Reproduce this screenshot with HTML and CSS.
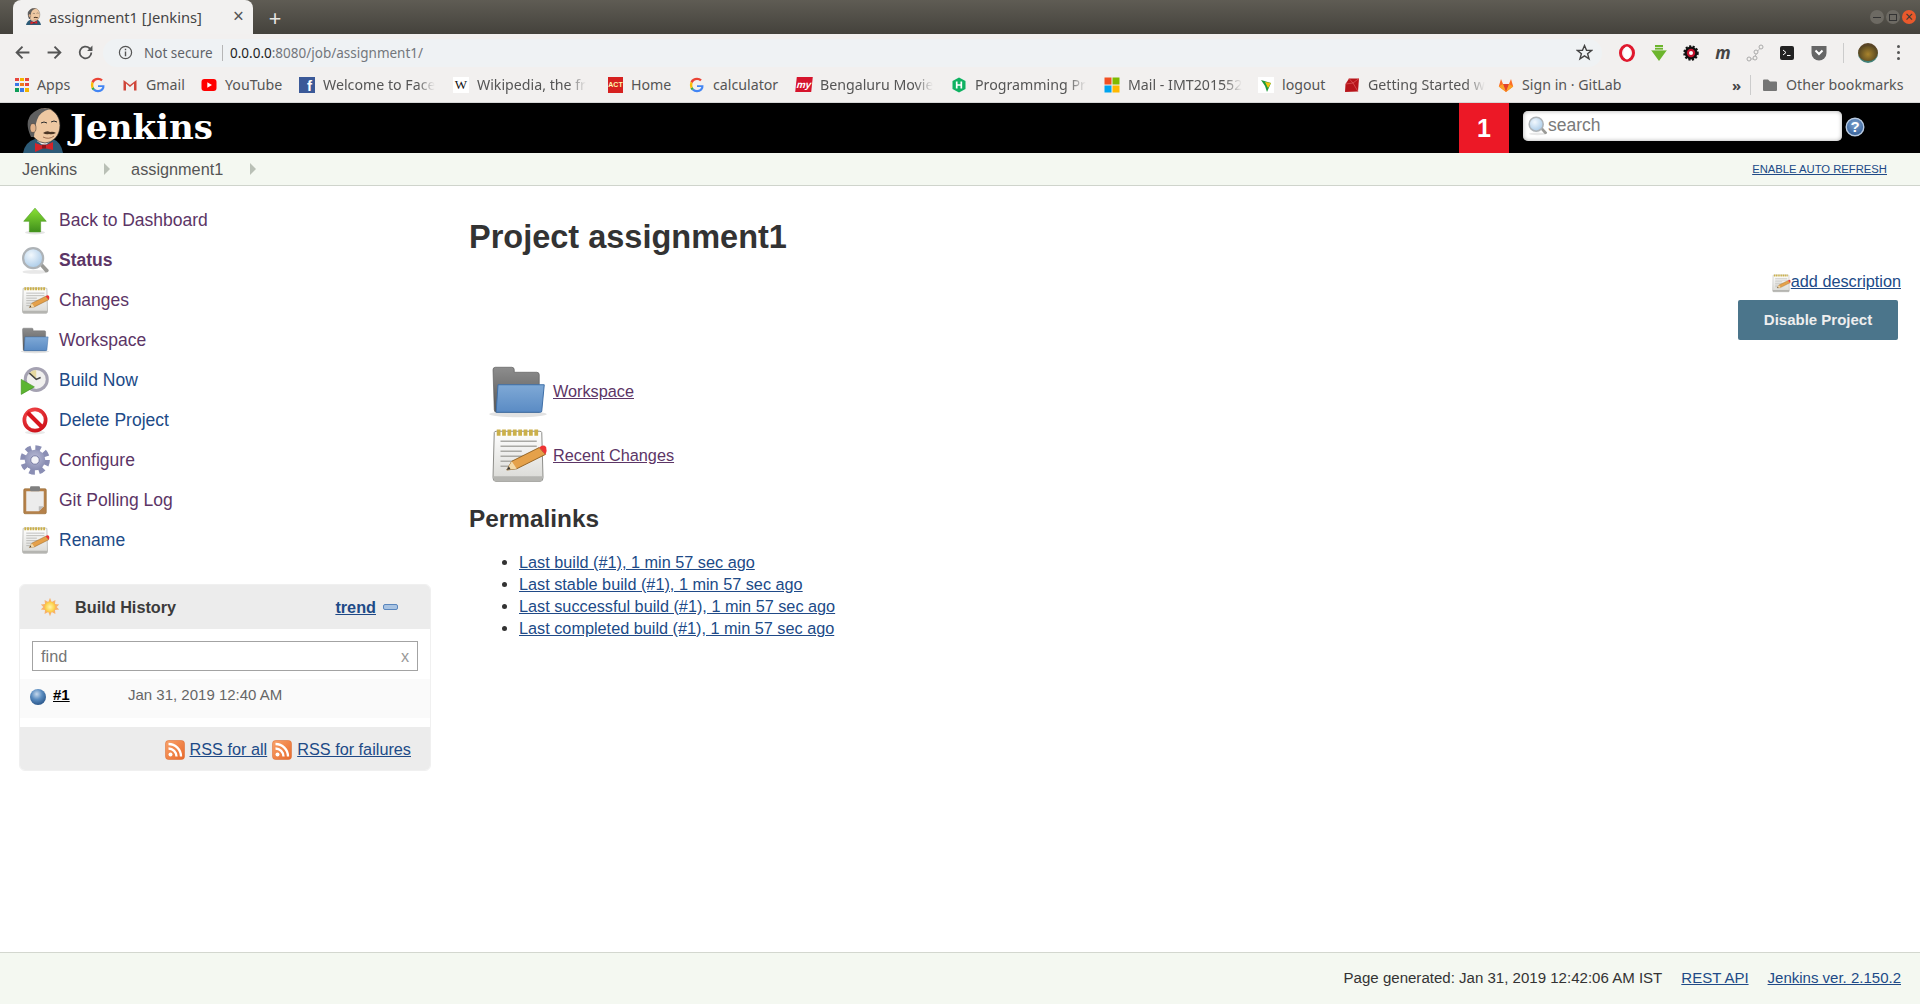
FILE: index.html
```html
<!DOCTYPE html>
<html lang="en">
<head>
<meta charset="utf-8">
<title>assignment1 [Jenkins]</title>
<link rel="stylesheet" href="styles.css">
</head>
<body>
<svg class="defs" aria-hidden="true">
  <defs>
    <linearGradient id="gArrow" x1="0" y1="0" x2="0" y2="1"><stop offset="0" stop-color="#8ae234"/><stop offset="1" stop-color="#3f8f1c"/></linearGradient>
    <linearGradient id="gFolder" x1="0" y1="0" x2="0" y2="1"><stop offset="0" stop-color="#7fa9d6"/><stop offset="1" stop-color="#5a8bc4"/></linearGradient>
    <linearGradient id="gFolderBack" x1="0" y1="0" x2="0" y2="1"><stop offset="0" stop-color="#8d8d8d"/><stop offset="1" stop-color="#555"/></linearGradient>
    <linearGradient id="gPage" x1="0" y1="0" x2="0" y2="1"><stop offset="0" stop-color="#fff"/><stop offset="1" stop-color="#d9d9d5"/></linearGradient>
    <linearGradient id="gRss" x1="0" y1="0" x2="1" y2="1"><stop offset="0" stop-color="#f9a26a"/><stop offset="1" stop-color="#e8692a"/></linearGradient>
    <radialGradient id="gBall" cx=".42" cy=".32" r=".75"><stop offset="0" stop-color="#c5d8ec"/><stop offset=".45" stop-color="#5a8cc0"/><stop offset="1" stop-color="#234e82"/></radialGradient>
    <radialGradient id="gLens" cx=".4" cy=".35" r=".8"><stop offset="0" stop-color="#f2f8fd"/><stop offset="1" stop-color="#9cc2e4"/></radialGradient>
    <radialGradient id="gSun" cx=".5" cy=".5" r=".5"><stop offset="0" stop-color="#fff6a8"/><stop offset="1" stop-color="#fcc93a"/></radialGradient>
    <radialGradient id="gHelp" cx=".5" cy=".35" r=".7"><stop offset="0" stop-color="#7fa3cf"/><stop offset="1" stop-color="#2e5a94"/></radialGradient>
    <radialGradient id="gRed" cx=".4" cy=".3" r=".8"><stop offset="0" stop-color="#ff5a5a"/><stop offset="1" stop-color="#cc0f18"/></radialGradient>
    <radialGradient id="gGear" cx=".5" cy=".4" r=".7"><stop offset="0" stop-color="#b9bbd6"/><stop offset="1" stop-color="#8085ac"/></radialGradient>

    <symbol id="i-jenkins" viewBox="0 0 40 45">
      <path d="M0 45Q2 34 12 31L30 31Q38 34 40 45Z" fill="#2c5a76"/>
      <path d="M14 33L21 38L28 33L27 30H15Z" fill="#f2f2f2"/>
      <ellipse cx="22" cy="17.500" rx="15" ry="17.500" fill="#eec8a2" stroke="#2b2b2b" stroke-width=".7"/>
      <path d="M8 29Q0 12 11 4Q18-1 27 1Q16 4 14 12Q12 18 11 29Z" fill="#5f5f5f"/>
      <ellipse cx="10" cy="20" rx="3" ry="4.500" fill="#e2b38c" stroke="#333" stroke-width=".5"/>
      <path d="M18 15Q21 13 24 15M28 14Q31 12 34 14" stroke="#2b2b2b" stroke-width="1" fill="none"/>
      <path d="M20 25Q24 22 27 24Q30 23 33 25Q29 27 26 26Q23 27 20 25Z" fill="#4a3525"/>
      <path d="M20 29Q26 32 31 28" stroke="#8a5a40" stroke-width=".8" fill="none"/>
      <path d="M12 35L21 38L30 34L30 42L21 40L12 44Z" fill="#d4242a"/>
      <rect x="19" y="36.500" width="4" height="4" fill="#8f1519"/>
    </symbol>

    <symbol id="i-arrow" viewBox="0 0 24 24">
      <ellipse cx="12" cy="22" rx="8" ry="1.500" fill="#e4e4e4"/>
      <path d="M12 2.500L21 13H16.500V21.500H7.500V13H3Z" fill="url(#gArrow)" stroke="#4b9a22" stroke-width=".5"/>
    </symbol>
    <symbol id="i-search" viewBox="0 0 24 24">
      <ellipse cx="12" cy="21.500" rx="10" ry="1.500" fill="#e8e8e8"/>
      <path d="M14.500 15L17 13.500L23 20Q23 22 20.500 22Z" fill="#9a9a96"/>
      <circle cx="10.500" cy="10.500" r="8" fill="url(#gLens)" stroke="#aeb3b7" stroke-width="1.800"/>
    </symbol>
    <symbol id="i-notepad" viewBox="0 0 48 48">
      <path d="M5 6Q5 5 7 5H41Q43 5 43 6L44 42Q44 45 42 45H6Q4 45 4 42Z" fill="url(#gPage)" stroke="#8e8e8a" stroke-width=".8"/>
      <path d="M4.500 41H43.500V43Q43.500 45 42 45H6Q4.500 45 4.500 43Z" fill="#b5b5b1"/>
      <path d="M7 6H41" stroke="#cbb04a" stroke-width="5" stroke-dasharray="3 1.300"/>
      <path d="M10 13H39M10 17H39M10 21H27M10 25H34M10 29H24M10 33H20" stroke="#a9a9a5" stroke-width="1.100"/>
      <path d="M15 36L19 29L41 18L46 23.500L23 35Z" fill="#e5a14a" stroke="#8a5a1c" stroke-width=".7"/>
      <path d="M15 36L19 29L23 35Z" fill="#f3d9a8"/>
      <path d="M15 36L16.700 33L18 35.300Z" fill="#333"/>
      <path d="M41 18Q44 15 46.500 17.500Q47.500 20.500 46 23.500Z" fill="#e33"/>
    </symbol>
    <symbol id="i-folder" viewBox="0 0 48 48">
      <ellipse cx="24" cy="42.500" rx="23" ry="2.500" fill="#e2e2e2"/>
      <path d="M4 7Q4 5 6 5H19Q21 5 21 7V9H39Q41 9 41 11V41H7Q5 41 5 39Z" fill="url(#gFolderBack)" stroke="#555" stroke-width=".5"/>
      <path d="M8 19H45L43 40Q43 41 42 41H6.500Z" fill="url(#gFolder)" stroke="#3e6fa8" stroke-width=".8"/>
    </symbol>
    <symbol id="i-clock" viewBox="0 0 24 24">
      <circle cx="13" cy="11.500" r="10" fill="#a5a2b2"/>
      <circle cx="13" cy="11.500" r="7.600" fill="#f1f0ee"/>
      <path d="M13 11.500V4A7.600 7.600 0 0 0 7.500 6.500Z" fill="#e6d9a0"/>
      <path d="M7.500 6.500L13 11.500L16.500 10" stroke="#444" stroke-width="1.100" fill="none"/>
      <path d="M1 11.500V23.500L11.500 17.500Z" fill="#5cb531" stroke="#3f8f1c" stroke-width=".5"/>
    </symbol>
    <symbol id="i-delete" viewBox="0 0 24 24">
      <ellipse cx="12" cy="22" rx="8" ry="1.500" fill="#e8e8e8"/>
      <circle cx="12" cy="12" r="8.500" fill="#fff" stroke="url(#gRed)" stroke-width="3"/>
      <path d="M6 6L18 18" stroke="#d8161e" stroke-width="3.200"/>
    </symbol>
    <symbol id="i-gear" viewBox="0 0 24 24">
      <circle cx="12" cy="12" r="9.400" fill="none" stroke="#8a8eb4" stroke-width="5" stroke-dasharray="4.200 3.180"/>
      <circle cx="12" cy="12" r="8.200" fill="url(#gGear)"/>
      <circle cx="12" cy="12" r="3.400" fill="#f4f4f8" stroke="#7a7ea6" stroke-width=".8"/>
    </symbol>
    <symbol id="i-clip" viewBox="0 0 24 24">
      <rect x="3" y="3" width="18" height="20" rx="1" fill="#b5814a" stroke="#94672f" stroke-width=".5"/>
      <path d="M5 5H19V17L15 21H5Z" fill="#ececec"/>
      <path d="M19 17L15 21V17Z" fill="#bbb"/>
      <rect x="8" y="1" width="8" height="4" rx="1" fill="#808080"/>
    </symbol>
    <symbol id="i-sun" viewBox="0 0 24 24">
      <path d="M12 1L14 6L18.500 3.500L18 8.500L23 9L20 12L23 15L18 15.500L18.500 20.500L14 18L12 23L10 18L5.500 20.500L6 15.500L1 15L4 12L1 9L6 8.500L5.500 3.500L10 6Z" fill="#f7b26a"/>
      <circle cx="12" cy="12" r="6.500" fill="url(#gSun)"/>
    </symbol>
    <symbol id="i-rss" viewBox="0 0 20 20">
      <rect x=".5" y=".5" width="19" height="19" rx="3" fill="url(#gRss)" stroke="#d9662a" stroke-width=".5"/>
      <circle cx="5.500" cy="14.500" r="2" fill="#fff"/>
      <path d="M3.500 8.500A8 8 0 0 1 11.500 16.500M3.500 4A12.500 12.500 0 0 1 16 16.500" stroke="#fff" stroke-width="2.300" fill="none"/>
    </symbol>
    <symbol id="i-g" viewBox="0 0 16 16">
      <path d="M14.500 8.200H8V10H12.400A4.600 4.600 0 0 1 8 13Q6 13 4.700 11.700L3 13.300Q5 15.300 8 15.300Q11 15.300 13 13.300Q14.800 11.300 14.500 8.200Z" fill="#4285f4"/>
      <path d="M3 13.300L4.700 11.700Q4 11 3.600 10L1.500 11.600Q2 12.600 3 13.300Z" fill="#34a853"/>
      <path d="M3.600 10Q3 8 3.600 6L1.500 4.400Q.100 8 1.500 11.600Z" fill="#fbbc05"/>
      <path d="M1.500 4.400L3.600 6Q5 3 8 3Q10 3 11.200 4.200L12.800 2.500Q11 .700 8 .700Q3.500 .700 1.500 4.400Z" fill="#ea4335"/>
    </symbol>
  </defs>
</svg>

<header class="chrome">
  <div class="tabstrip">
    <div class="tab">
      <svg class="tab-fav"><use href="#i-jenkins"/></svg>
      <span class="tab-title">assignment1 [Jenkins]</span>
      <span class="tab-close">×</span>
    </div>
    <span class="tab-new">+</span>
    <div class="winbtns">
      <span class="winbtn"><span class="winbtn-min"></span></span>
      <span class="winbtn"><span class="winbtn-max"></span></span>
      <span class="winbtn winbtn-close">×</span>
    </div>
  </div>

  <div class="toolbar">
    <svg class="navicon" viewBox="0 0 16 16"><path d="M14.500 8H2.500M8 2.500L2.500 8L8 13.500" fill="none" stroke="#555" stroke-width="1.800"/></svg>
    <svg class="navicon" viewBox="0 0 16 16"><path d="M1.500 8H13.500M8 2.500L13.500 8L8 13.500" fill="none" stroke="#555" stroke-width="1.800"/></svg>
    <svg class="navicon" viewBox="0 0 16 16"><path d="M13.500 8A5.500 5.500 0 1 1 11.800 4L13.500 5.500" fill="none" stroke="#555" stroke-width="1.700"/><path d="M14.500 1.500V6.500H9.500Z" fill="#555"/></svg>
    <div class="omnibox">
      <svg class="omni-info" viewBox="0 0 16 16"><circle cx="8" cy="8" r="6.500" fill="none" stroke="#555" stroke-width="1.300"/><path d="M8 7V12M8 4V5.600" stroke="#555" stroke-width="1.500"/></svg>
      <span class="omni-secure">Not secure</span>
      <span class="omni-sep"></span>
      <span class="omni-url"><span class="omni-host">0.0.0.0</span>:8080/job/assignment1/</span>
      <svg class="omni-star" viewBox="0 0 16 16"><path d="M8 1.500L9.900 6H14.800L10.900 9.100L12.300 14L8 11.200L3.700 14L5.100 9.100L1.200 6H6.100Z" fill="none" stroke="#444" stroke-width="1.300"/></svg>
    </div>
    <div class="extensions">
      <svg class="ext" viewBox="0 0 18 18"><ellipse cx="9" cy="9" rx="6.500" ry="7.500" fill="none" stroke="#e0182d" stroke-width="3"/><ellipse cx="9" cy="9" rx="3.500" ry="6.500" fill="#fff"/></svg>
      <svg class="ext" viewBox="0 0 18 18"><path d="M5 1H13V6H17L9 17L1 6H5Z" fill="#6cb52d"/><path d="M1 6H17M3 3.500H15" stroke="#f2f0ee" stroke-width=".8"/></svg>
      <svg class="ext" viewBox="0 0 18 18"><circle cx="9" cy="9" r="6.500" fill="#111" stroke="#111" stroke-width="2.500" stroke-dasharray="2 1.500"/><circle cx="9" cy="9" r="4.200" fill="#c4112d"/><circle cx="9" cy="9" r="2" fill="#fff"/></svg>
      <span class="ext ext-m">m</span>
      <svg class="ext" viewBox="0 0 18 18"><path d="M3 15H8L11 8L15 3" fill="none" stroke="#bbb" stroke-width="1"/><circle cx="3" cy="15" r="2" fill="#f2f0ee" stroke="#aaa"/><circle cx="9" cy="14" r="2" fill="#f2f0ee" stroke="#aaa"/><circle cx="10" cy="8" r="2" fill="#f2f0ee" stroke="#aaa"/><circle cx="15" cy="3" r="2" fill="#f2f0ee" stroke="#aaa"/></svg>
      <svg class="ext" viewBox="0 0 18 18"><rect x="2" y="2" width="14" height="14" rx="2" fill="#222"/><path d="M5 6L8 8.500L5 11M9 11.500H12.500" fill="none" stroke="#fff" stroke-width="1"/></svg>
      <svg class="ext" viewBox="0 0 18 18"><path d="M1.500 2H16.500V9A7.500 7.500 0 0 1 1.500 9Z" fill="#666"/><path d="M5.500 6.500L9 10L12.500 6.500" fill="none" stroke="#fff" stroke-width="2"/></svg>
      <span class="ext-sep"></span>
      <span class="avatar"></span>
      <span class="kebab"><i></i><i></i><i></i></span>
    </div>
  </div>

  <nav class="bookmarks">
    <a class="bm"><span class="bm-apps"><i class="a1"></i><i class="a2"></i><i class="a3"></i><i class="a4"></i><i class="a5"></i><i class="a6"></i><i class="a7"></i><i class="a8"></i><i class="a9"></i></span><span class="bm-label">Apps</span></a>
    <a class="bm"><svg class="bm-ico"><use href="#i-g"/></svg></a>
    <a class="bm"><svg class="bm-ico" viewBox="0 0 16 16"><path d="M1.500 13.500V3L8 8L14.500 3V13.500H12V6.500L8 10L4 6.500V13.500Z" fill="#d0463a"/></svg><span class="bm-label">Gmail</span></a>
    <a class="bm"><svg class="bm-ico" viewBox="0 0 16 16"><rect x=".5" y="2" width="15" height="12" rx="3" fill="#f00"/><path d="M6.300 5.300L11 8L6.300 10.700Z" fill="#fff"/></svg><span class="bm-label">YouTube</span></a>
    <a class="bm"><span class="bm-fb">f</span><span class="bm-label bm-fade">Welcome to Face</span></a>
    <a class="bm"><span class="bm-wiki">W</span><span class="bm-label bm-fade">Wikipedia, the fr</span></a>
    <a class="bm"><span class="bm-act">ACT</span><span class="bm-label">Home</span></a>
    <a class="bm"><svg class="bm-ico"><use href="#i-g"/></svg><span class="bm-label">calculator</span></a>
    <a class="bm"><span class="bm-my">my</span><span class="bm-label bm-fade">Bengaluru Movie</span></a>
    <a class="bm"><svg class="bm-ico" viewBox="0 0 16 16"><path d="M8 .500L14.500 4V12L8 15.500L1.500 12V4Z" fill="#0fb262"/><path d="M5.700 4.500V11.500M10.300 4.500V11.500M5.700 8H10.300" stroke="#fff" stroke-width="1.700"/></svg><span class="bm-label bm-fade">Programming Pr</span></a>
    <a class="bm"><svg class="bm-ico" viewBox="0 0 16 16"><rect x=".5" y=".5" width="7" height="7" fill="#f25022"/><rect x="8.500" y=".5" width="7" height="7" fill="#7fba00"/><rect x=".5" y="8.500" width="7" height="7" fill="#00a4ef"/><rect x="8.500" y="8.500" width="7" height="7" fill="#ffb900"/></svg><span class="bm-label bm-fade">Mail - IMT201552</span></a>
    <a class="bm"><svg class="bm-ico" viewBox="0 0 16 16"><rect width="16" height="16" fill="#fff"/><path d="M3 3L13 6L9 15L7 9Z" fill="#1f9a3a"/><path d="M7 5L13 6L10 11Z" fill="#f2c40f"/></svg><span class="bm-label">logout</span></a>
    <a class="bm"><svg class="bm-ico" viewBox="0 0 16 16"><path d="M5 1.500H15L14 14.500L1 15L1.500 7Z" fill="#b7141a"/><path d="M5 1.500L9 6L14 14.500M9 6L1.500 7M9 6L15 1.500" stroke="#e86a6a" stroke-width=".6" fill="none"/></svg><span class="bm-label bm-fade">Getting Started w</span></a>
    <a class="bm"><svg class="bm-ico" viewBox="0 0 16 16"><path d="M8 15L.8 9.500L3 2L5 7H11L13 2L15.200 9.500Z" fill="#fc6d26"/><path d="M8 15L5 7H11Z" fill="#e24329"/><path d="M.8 9.500L5 7L8 15ZM15.200 9.500L11 7L8 15Z" fill="#fca326"/></svg><span class="bm-label">Sign in · GitLab</span></a>
    <span class="bm-more">»</span>
    <span class="bm-sep"></span>
    <a class="bm bm-other"><svg class="bm-ico" viewBox="0 0 16 16"><path d="M1 3.500Q1 2.500 2 2.500H6L8 4.500H14Q15 4.500 15 5.500V13Q15 14 14 14H2Q1 14 1 13Z" fill="#757575"/></svg><span class="bm-label">Other bookmarks</span></a>
  </nav>
</header>

<div class="page-head">
  <a class="logo"><svg class="logo-head"><use href="#i-jenkins"/></svg><span class="logo-text">Jenkins</span></a>
  <div class="head-right">
    <span class="badge">1</span>
    <div class="searchbox">
      <svg class="search-ico"><use href="#i-search"/></svg>
      <span class="search-ph">search</span>
    </div>
    <svg class="help" viewBox="0 0 20 20"><circle cx="10" cy="10" r="8.800" fill="url(#gHelp)" stroke="#b9cbe2" stroke-width="1.400"/><text class="help-q" x="10" y="15" text-anchor="middle">?</text></svg>
  </div>
</div>

<div class="crumbs">
  <a class="crumb">Jenkins</a><span class="crumb-arrow"></span>
  <a class="crumb">assignment1</a><span class="crumb-arrow"></span>
  <a class="refresh" href="#">ENABLE AUTO REFRESH</a>
</div>

<main class="layout">
  <aside class="side">
    <ul class="tasks">
      <li class="task"><svg class="task-ico"><use href="#i-arrow"/></svg><a class="visited">Back to Dashboard</a></li>
      <li class="task"><svg class="task-ico"><use href="#i-search"/></svg><a class="visited task-current">Status</a></li>
      <li class="task"><svg class="task-ico"><use href="#i-notepad"/></svg><a class="visited">Changes</a></li>
      <li class="task"><svg class="task-ico"><use href="#i-folder"/></svg><a class="visited">Workspace</a></li>
      <li class="task"><svg class="task-ico"><use href="#i-clock"/></svg><a class="link">Build Now</a></li>
      <li class="task"><svg class="task-ico"><use href="#i-delete"/></svg><a class="link">Delete Project</a></li>
      <li class="task"><svg class="task-ico"><use href="#i-gear"/></svg><a class="visited">Configure</a></li>
      <li class="task"><svg class="task-ico"><use href="#i-clip"/></svg><a class="visited">Git Polling Log</a></li>
      <li class="task"><svg class="task-ico"><use href="#i-notepad"/></svg><a class="link">Rename</a></li>
    </ul>

    <section class="history">
      <div class="history-head">
        <svg class="sun"><use href="#i-sun"/></svg>
        <span class="history-title">Build History</span>
        <a class="trend" href="#">trend</a>
        <span class="minus"></span>
      </div>
      <div class="history-body">
        <div class="find"><span class="find-ph">find</span><span class="find-x">x</span></div>
        <div class="build">
          <svg class="ball" viewBox="0 0 20 20"><circle cx="10" cy="10" r="8" fill="url(#gBall)"/></svg>
          <a class="build-no" href="#">#1</a>
          <span class="build-date">Jan 31, 2019 12:40 AM</span>
        </div>
      </div>
      <div class="history-foot">
        <svg class="rss"><use href="#i-rss"/></svg><a class="link-u" href="#">RSS for all</a>
        <svg class="rss"><use href="#i-rss"/></svg><a class="link-u" href="#">RSS for failures</a>
      </div>
    </section>
  </aside>

  <section class="content">
    <h1 class="title">Project assignment1</h1>
    <div class="desc-row"><svg class="desc-ico"><use href="#i-notepad"/></svg><a class="link-u" href="#">add description</a></div>
    <div class="btn-row"><button class="btn">Disable Project</button></div>
    <div class="proj-link"><svg class="proj-ico"><use href="#i-folder"/></svg><a class="visited-u" href="#">Workspace</a></div>
    <div class="proj-link"><svg class="proj-ico"><use href="#i-notepad"/></svg><a class="visited-u" href="#">Recent Changes</a></div>
    <h2 class="perma-title">Permalinks</h2>
    <ul class="permalinks">
      <li><a class="link-u" href="#">Last build (#1), 1 min 57 sec ago</a></li>
      <li><a class="link-u" href="#">Last stable build (#1), 1 min 57 sec ago</a></li>
      <li><a class="link-u" href="#">Last successful build (#1), 1 min 57 sec ago</a></li>
      <li><a class="link-u" href="#">Last completed build (#1), 1 min 57 sec ago</a></li>
    </ul>
  </section>
</main>

<footer class="foot">
  <span class="foot-gen">Page generated: Jan 31, 2019 12:42:06 AM IST</span>
  <a class="link-u" href="#">REST API</a>
  <a class="link-u" href="#">Jenkins ver. 2.150.2</a>
</footer>
</body>
</html>
```
FILE: styles.css
```css
* { box-sizing: border-box; }
html, body { margin: 0; height: 100%; }
body {
  width: 1920px;
  height: 1004px;
  overflow: hidden;
  display: flex;
  flex-direction: column;
  font-family: "Liberation Sans", Arial, sans-serif;
  font-size: 16.25px;
  color: #333;
  background: #fff;
}
.defs { position: absolute; width: 0; height: 0; }
ul { margin: 0; padding: 0; list-style: none; }
a { cursor: pointer; }

/* browser chrome */
.chrome { height: 103px; flex: none; font-family: "Noto Sans", sans-serif; font-size: 13.5px; color: #5a5a5a; }
.tabstrip {
  height: 34px;
  display: flex;
  align-items: flex-end;
  padding-left: 13px;
  background: linear-gradient(#5f5c54, #44423c);
}
.tab {
  width: 240px;
  height: 34px;
  display: flex;
  align-items: center;
  padding: 0 0 1px 13px;
  background: #f2f1f0;
  border-radius: 8px 8px 0 0;
  color: #444;
}
.tab-fav { width: 15px; height: 17px; flex: none; }
.tab-title { margin-left: 8px; width: 175px; white-space: nowrap; font-size: 14.7px; }
.tab-close { font-size: 19px; line-height: 1; margin-left: 9px; color: #555; }
.tab-new { width: 44px; height: 34px; line-height: 34px; text-align: center; color: #e8e6e2; font-size: 22px; }
.winbtns { margin-left: auto; height: 34px; display: flex; align-items: center; gap: 2px; padding-right: 4px; }
.winbtn { width: 14px; height: 14px; border-radius: 50%; background: #6d6a63; display: flex; align-items: center; justify-content: center; color: #3a3a36; }
.winbtn-min { width: 8px; height: 1px; background: #333; }
.winbtn-max { width: 8px; height: 7px; border: 1px solid #333; }
.winbtn-close { background: #e9592c; font-size: 14px; line-height: 14px; }

.toolbar { height: 35px; display: flex; align-items: center; padding: 2px 0 0 14px; background: #f2f0ef; }
.navicon { width: 17px; height: 17px; margin-right: 15px; flex: none; }
.navicon + .navicon + .navicon { margin-left: -1px; }
.omnibox {
  margin-left: -6px;
  width: 1499px;
  height: 28px;
  display: flex;
  align-items: center;
  padding-left: 15px;
  padding-right: 9px;
  border-radius: 14px;
  background: #eff2f4;
}
.omni-info { width: 15px; height: 15px; flex: none; }
.omni-secure { margin-left: 11px; width: 68px; white-space: nowrap; color: #5f6368; }
.omni-sep { width: 1px; height: 16px; background: #b6b6b6; margin: 0 7px 0 10px; }
.omni-url { color: #73777c; white-space: nowrap; font-size: 13.5px; }
.omni-host { color: #222; }
.omni-star { width: 17px; height: 17px; margin-left: auto; }
.extensions { display: flex; align-items: center; flex: none; margin-left: 16px; }
.ext { width: 18px; height: 18px; margin-right: 14px; flex: none; }
.ext-m { font: italic bold 17px/18px "Noto Sans", sans-serif; color: #444; text-align: center; }
.ext-sep { width: 1px; height: 20px; background: #ccc; margin: 0 14px 0 1px; }
.avatar { width: 20px; height: 20px; border-radius: 50%; background: radial-gradient(circle at 50% 55%, #a8832c, #5b4a22 70%); border-top: 3px solid #5a4526; border-bottom: 2px solid #3f7f78; }
.kebab { margin-left: 19px; width: 4px; display: flex; flex-direction: column; gap: 3px; }
.kebab i { width: 3px; height: 3px; border-radius: 50%; background: #555; }

.bookmarks {
  height: 34px;
  display: grid;
  grid-template-columns: 75px 32px 79px 98px 154px 155px 81px 107px 155px 153px 154px 86px 154px 234px 18px 12px 1fr;
  align-items: center;
  padding: 0 0 2px 15px;
  background: #f2f0ef;
  border-bottom: 1px solid #d6d6d6;
  font-size: 14.2px;
}
.bm { display: flex; align-items: center; min-width: 0; }
.bm-ico { width: 16px; height: 16px; flex: none; }
.bm-label { margin-left: 8px; white-space: nowrap; color: #555; }
.bm-fade { -webkit-mask-image: linear-gradient(90deg, #000 84%, transparent); mask-image: linear-gradient(90deg, #000 84%, transparent); }
.bm-apps { width: 14px; height: 14px; display: grid; grid-template: repeat(3, 1fr) / repeat(3, 1fr); gap: 1.500px; flex: none; }
.bm-apps i { display: block; }
.a1, .a2, .a3 { background: #e8453c; }
.a2 { background: #f4b400; }
.a4 { background: #3b78e7; }
.a5 { background: #ee7a1a; }
.a6 { background: #e8453c; }
.a7 { background: #0f9d58; }
.a8 { background: #3b78e7; }
.a9 { background: #f4b400; }
.bm-fb { width: 16px; height: 16px; background: #3b5998; color: #fff; font: bold 15px/18px "Liberation Sans", sans-serif; text-align: right; padding-right: 3px; flex: none; }
.bm-wiki { width: 16px; height: 16px; background: #fff; color: #111; font: 13px/16px "Liberation Serif", serif; text-align: center; flex: none; }
.bm-act { width: 15px; height: 16px; background: #d6201f; color: #fff8b0; font: bold 7px/16px "Liberation Sans", sans-serif; text-align: center; overflow: hidden; flex: none; }
.bm-my { width: 16px; height: 15px; background: #d6142c; color: #fff; font: italic bold 10px/15px "Liberation Sans", sans-serif; text-align: center; transform: skewX(-6deg); flex: none; }
.bm-more { color: #444; font-size: 15px; font-weight: 700; }
.bm-sep { width: 1px; height: 20px; background: #ccc; }
.bm-other .bm-label { margin-left: 8px; }

/* jenkins header */
.page-head {
  height: 50px;
  flex: none;
  display: flex;
  align-items: stretch;
  background: #000;
  padding-left: 23px;
}
.logo { display: flex; align-items: flex-end; }
.logo-head { width: 40px; height: 45px; flex: none; }
.logo-text {
  margin: -2px 0 0 7px;
  align-self: center;
  font: bold 34px/50px "DejaVu Serif", serif;
  color: #fff;
}
.head-right { margin-left: auto; display: flex; align-items: center; }
.badge {
  width: 50px;
  height: 50px;
  background: #ec1826;
  color: #fff;
  font-size: 25px;
  font-weight: 700;
  line-height: 50px;
  text-align: center;
}
.searchbox {
  margin: -4px 0 0 14px;
  width: 319px;
  height: 30px;
  display: flex;
  align-items: center;
  padding: 0 0 1px 4px;
  background: #fff;
  border-radius: 5px;
  box-shadow: inset 0 0 4px #aaa;
}
.search-ico { width: 21px; height: 21px; flex: none; }
.search-ph { margin-left: 0; font-size: 17.5px; color: #7a7a7a; }
.help { width: 20px; height: 20px; margin: -2px 55px 0 3px; }
.help-q { font: bold 15px "Liberation Sans", sans-serif; fill: #fff; }

.crumbs {
  height: 33px;
  flex: none;
  display: flex;
  align-items: center;
  padding-left: 22px;
  background: #f4f8f1;
  border-bottom: 1px solid #cfd4cc;
  color: #555;
}
.crumb { white-space: nowrap; }
.crumb-arrow { width: 0; height: 0; margin: 0 21px 0 27px; border: 6px solid transparent; border-left: 6px solid #b9c0b6; border-right: 0; }
.refresh { margin: 0 33px 0 auto; font-size: 11.25px; color: #204a87; }

/* layout */
.layout { flex: 1; display: flex; min-height: 0; }
.side { width: 469px; flex: none; padding: 14px 0 0 19px; }
.task { height: 40px; display: flex; align-items: center; font-size: 17.5px; }
.task-ico { width: 30px; height: 30px; flex: none; margin: 0 9px 0 1px; }
.visited { color: #5c3566; }
.link { color: #204a87; }
.task-current { font-weight: 700; }
.link-u { color: #204a87; text-decoration: underline; }
.visited-u { color: #5c3566; text-decoration: underline; }

.history {
  width: 412px;
  height: 187px;
  margin-top: 24px;
  display: flex;
  flex-direction: column;
  border-radius: 6px;
  border: 1px solid #f0f0f0;
  overflow: hidden;
  background: #fff;
}
.history-head { height: 44px; flex: none; display: flex; align-items: center; background: #ececec; padding-left: 20px; }
.sun { width: 20px; height: 20px; flex: none; }
.history-title { margin-left: 15px; font-weight: 700; color: #3b3b3b; }
.trend { margin-left: auto; font-weight: 700; color: #204a87; }
.minus { width: 15px; height: 6px; margin: 0 32px 0 7px; background: #a8c3e2; border: 1px solid #5a86bd; border-radius: 2px; }
.history-body { flex: 1; padding-top: 12px; }
.find {
  width: 386px;
  height: 30px;
  margin-left: 12px;
  display: flex;
  align-items: center;
  justify-content: space-between;
  padding: 0 8px;
  border: 1.500px solid #a3a3a3;
  color: #757575;
}
.find-x { color: #999; }
.build { height: 39px; margin-top: 8px; display: flex; align-items: flex-start; padding: 7px 0 0 8px; background: #fafafa; }
.ball { width: 20px; height: 20px; flex: none; margin-top: 1px; }
.build-no { margin-left: 5px; width: 75px; font-size: 15px; font-weight: 700; color: #000; text-decoration: underline; }
.build-date { font-size: 15px; color: #666; }
.history-foot { height: 43px; flex: none; display: flex; align-items: center; justify-content: flex-end; padding: 2px 19px 0 0; background: #ececec; }
.rss { width: 20px; height: 20px; flex: none; margin: 0 5px; }

/* main content */
.content { flex: 1; padding: 33px 19px 0 0; display: flex; flex-direction: column; }
.title { margin: 0; font-size: 32.5px; line-height: 36px; font-weight: 700; color: #333; }
.desc-row { margin-top: 15px; height: 22px; display: flex; justify-content: flex-end; align-items: center; }
.desc-ico { width: 20px; height: 20px; margin-top: 4px; }
.btn-row { margin-top: 8px; display: flex; justify-content: flex-end; }
.btn {
  width: 160px;
  height: 40px;
  margin-right: 3px;
  padding: 0 0 2px;
  border: 0;
  border-radius: 2px;
  background: #4b758b;
  color: #eee;
  font: 700 15px "Liberation Sans", sans-serif;
}
.proj-link { height: 64px; display: flex; align-items: center; padding-left: 19px; }
.btn-row + .proj-link { margin-top: 19px; }
.proj-ico { width: 60px; height: 60px; flex: none; margin-right: 5px; }
.perma-title { margin: 19px 0 0; font-size: 24.375px; line-height: 26px; font-weight: 700; color: #333; }
.permalinks { margin-top: 19px; padding-left: 50px; list-style: disc; }
.permalinks li { height: 22px; line-height: 22px; }

.foot {
  height: 52px;
  flex: none;
  display: flex;
  align-items: center;
  justify-content: flex-end;
  gap: 19px;
  padding: 0 19px 2px 0;
  background: #f4f8f1;
  border-top: 1px solid #d3d7cf;
  font-size: 15px;
}
.foot-gen { font-size: 15.05px; }
```
